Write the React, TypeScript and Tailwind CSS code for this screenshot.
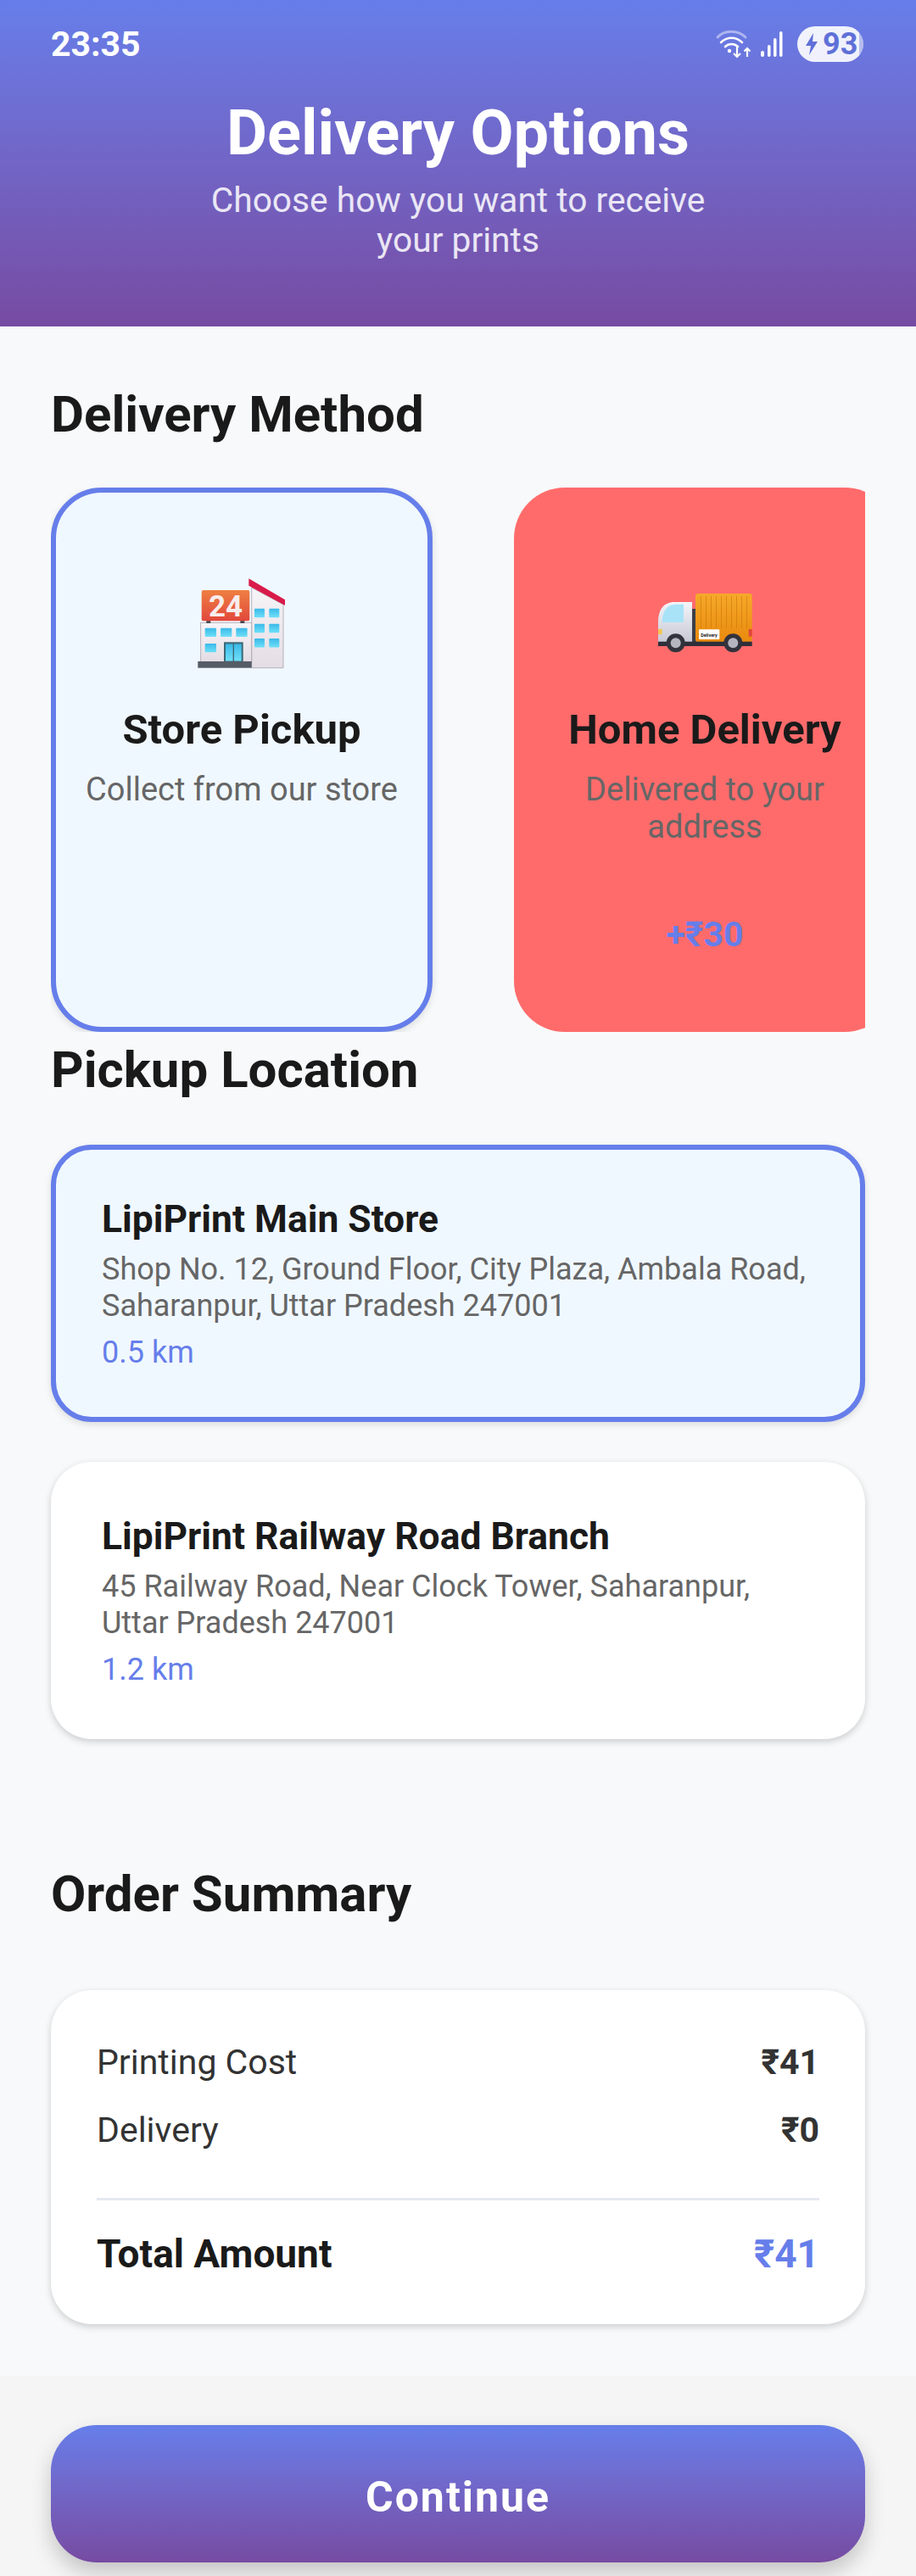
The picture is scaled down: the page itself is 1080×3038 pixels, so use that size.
const font = { fontFamily: 'Roboto, "Noto Sans", sans-serif' }

function WifiIcon() {
  return (
    <svg width="48" height="36" viewBox="0 0 48 36" fill="none" className="block">
      <path d="M3 10 C11 1 27 1 36 10" stroke="#ffffff" strokeOpacity="0.45" strokeWidth="3" strokeLinecap="round" />
      <path d="M7 16 C14 9 25 9 32 16" stroke="#ffffff" strokeWidth="2.6" strokeLinecap="round" />
      <path d="M12 21 C16 17 23 17 27 21" stroke="#ffffff" strokeWidth="2.6" strokeLinecap="round" />
      <circle cx="17" cy="26" r="2.2" fill="#ffffff" />
      <path d="M26 21 V33 M22 29 L26 33 L30 29" stroke="#ffffff" strokeWidth="2.2" />
      <path d="M38 33 V23 M34.5 26.5 L38 23 L41.5 26.5" stroke="#ffffff" strokeWidth="2.2" />
    </svg>
  )
}

function SignalIcon() {
  return (
    <svg width="28" height="32" viewBox="0 0 28 32" className="block">
      <rect x="0" y="24" width="4" height="7" rx="2" fill="#ffffff" />
      <rect x="8" y="17" width="3.5" height="14" rx="1.7" fill="#ffffff" />
      <rect x="15" y="9" width="3.5" height="22" rx="1.7" fill="#ffffff" />
      <rect x="22" y="1" width="3.5" height="30" rx="1.7" fill="#ffffff" />
    </svg>
  )
}

function BatteryPill() {
  return (
    <div className="relative flex h-[42px] w-[78px] items-center overflow-hidden rounded-[21px] bg-white/90 pl-[9px]">
      <svg width="16" height="28" viewBox="0 0 16 28" className="block shrink-0">
        <path d="M10 1 L1 16 H7 L5 27 L15 11 H9 Z" fill="#5f70d8" />
      </svg>
      <span className="ml-[5px] text-[36px] leading-none font-bold text-[#5f70d8]">93</span>
      <div className="absolute inset-y-0 right-0 w-[5px] bg-[#5f70d8]/40" />
    </div>
  )
}

function StoreEmoji() {
  return (
    <svg width="120" height="120" viewBox="0 0 120 120" className="block">
      <defs>
        <linearGradient id="sign" x1="0" y1="0" x2="0" y2="1">
          <stop offset="0" stopColor="#ee7f42" />
          <stop offset="1" stopColor="#e2483c" />
        </linearGradient>
        <linearGradient id="glass" x1="0" y1="0" x2="0" y2="1">
          <stop offset="0" stopColor="#3bb9e8" />
          <stop offset="1" stopColor="#6fe0f8" />
        </linearGradient>
        <linearGradient id="wall" x1="0" y1="0" x2="0" y2="1">
          <stop offset="0" stopColor="#f7f5f8" />
          <stop offset="1" stopColor="#e4dde4" />
        </linearGradient>
      </defs>
      <path d="M71.7 18 L109 38 V112.7 H71.7 Z" fill="url(#wall)" stroke="#a9a2ac" strokeWidth="0.8" />
      <path d="M68.3 7.3 L111 32.3 V39 L68.3 15.7 Z" fill="#d81b4a" />
      <rect x="11.7" y="59.3" width="60" height="46" fill="url(#wall)" stroke="#a9a2ac" strokeWidth="0.8" />
      <rect x="18.3" y="56" width="5" height="4" fill="#4b4f57" />
      <rect x="58.3" y="56" width="5" height="4" fill="#4b4f57" />
      <rect x="12.7" y="21" width="56.6" height="36.3" rx="2" fill="url(#sign)" />
      <text x="41" y="51.7" textAnchor="middle" fontFamily="Roboto, sans-serif" fontWeight="700" fontSize="35" fill="#f8ecec">24</text>
      <rect x="16.7" y="65.7" width="13.3" height="10.3" rx="1" fill="url(#glass)" />
      <rect x="35" y="65.7" width="13.3" height="10.3" rx="1" fill="url(#glass)" />
      <rect x="53.3" y="65.7" width="13.3" height="10.3" rx="1" fill="url(#glass)" />
      <rect x="16.7" y="84" width="13.3" height="10.3" rx="1" fill="url(#glass)" />
      <rect x="39" y="82.3" width="22.7" height="22.7" fill="#3d6a78" />
      <rect x="41" y="84.5" width="8.6" height="20" fill="url(#glass)" />
      <rect x="51" y="84.5" width="8.6" height="20" fill="url(#glass)" />
      <rect x="8.3" y="105" width="63.4" height="7.7" fill="#555c66" />
      {[75, 92.3].map((x) =>
        [42.7, 60.7, 78].map((y) => (
          <rect key={`${x}-${y}`} x={x} y={y} width="12" height="10.6" rx="1" fill="url(#glass)" />
        ))
      )}
    </svg>
  )
}

function TruckEmoji() {
  const stripes = [55, 61, 67, 73, 79, 85, 91, 97, 103, 109]
  return (
    <svg width="120" height="120" viewBox="0 0 120 120" className="block">
      <defs>
        <linearGradient id="cargo" x1="0" y1="0" x2="0" y2="1">
          <stop offset="0" stopColor="#f6a92a" />
          <stop offset="1" stopColor="#e98a0e" />
        </linearGradient>
        <linearGradient id="cab" x1="0" y1="0" x2="0" y2="1">
          <stop offset="0" stopColor="#f4f5fa" />
          <stop offset="1" stopColor="#c6c8d4" />
        </linearGradient>
      </defs>
      <rect x="45" y="43" width="5" height="39" fill="#3c3f4a" />
      <rect x="49" y="25" width="66.7" height="57" rx="3" fill="url(#cargo)" />
      {stripes.map((x) => (
        <rect key={x} x={x} y="28" width="1" height="38" fill="#c97608" opacity="0.6" />
      ))}
      <path d="M5 83 V58 C5 44 12 35 24 35 H45 V83 Z" fill="url(#cab)" />
      <path d="M9.7 59 C9.7 46 15 37.7 26 37.7 H35 V59 Z" fill="#a9e3f8" />
      <rect x="5" y="66.7" width="4.7" height="6.6" rx="1" fill="#f6c453" />
      <rect x="111.7" y="67" width="4" height="8.7" fill="#e0463a" />
      <rect x="5" y="81.7" width="110.7" height="5.3" fill="#2f2f3a" />
      <rect x="53" y="67.3" width="24.3" height="11.7" rx="1" fill="#ffffff" />
      <text x="65" y="75.5" textAnchor="middle" fontFamily="Roboto, sans-serif" fontWeight="700" fontSize="5.4" fill="#1a1a1a">Delivery</text>
      {[25.7, 93.3].map((cx) => (
        <g key={cx}>
          <circle cx={cx} cy="83.3" r="11" fill="#33333d" />
          <circle cx={cx} cy="83.3" r="6" fill="#b5b5c0" />
        </g>
      ))}
    </svg>
  )
}

function SectionTitle({ children }: { children: React.ReactNode }) {
  return <h2 className="text-[60px] leading-[72px] font-bold text-[#1a1a1a]">{children}</h2>
}

function LocationCard({ name, lines, km, selected }: { name: string; lines: string[]; km: string; selected?: boolean }) {
  return (
    <div
      className={
        selected
          ? 'flex h-[327px] flex-col justify-center rounded-[48px] border-[6px] border-[#667eea] bg-[#f0f8ff] px-[54px] shadow-[0_3px_8px_rgba(0,0,0,0.12)]'
          : 'flex h-[327px] flex-col justify-center rounded-[48px] bg-white px-[60px] shadow-[0_3px_8px_rgba(0,0,0,0.18)]'
      }
    >
      <div className="text-[44.4px] leading-[56px] font-bold text-[#1a1a1a]">{name}</div>
      <div className="mt-[10px] text-[36px] leading-[43px] whitespace-nowrap text-[#666666]">
        {lines.map((l) => (
          <div key={l}>{l}</div>
        ))}
      </div>
      <div className="mt-[11px] text-[36px] leading-[44px] text-[#667eea]">{km}</div>
    </div>
  )
}

export default function App() {
  return (
    <div style={font} className="flex h-[3038px] w-[1080px] flex-col overflow-hidden bg-[#f8f9fa]">
      <header className="h-[385px] shrink-0 bg-gradient-to-b from-[#667eea] to-[#764ba2] px-[60px] pt-[30px]">
        <div className="flex h-[44px] items-center justify-between pr-[2px]">
          <span className="text-[41px] leading-none font-bold text-white">23:35</span>
          <div className="flex items-center">
            <WifiIcon />
            <div className="mr-[15px] ml-[6px]">
              <SignalIcon />
            </div>
            <BatteryPill />
          </div>
        </div>
        <h1 className="mt-[43px] text-center text-[74px] leading-[80px] font-bold text-white">Delivery Options</h1>
        <p className="mx-auto mt-[16px] w-[640px] text-center text-[40.7px] leading-[47px] text-white/85">
          Choose how you want to receive your prints
        </p>
      </header>

      <main className="flex-1 px-[60px] pt-[68px]">
        <SectionTitle>Delivery Method</SectionTitle>

        <div className="mt-[50px] flex h-[642px] gap-[96px] overflow-hidden">
          <div className="flex w-[450px] shrink-0 flex-col items-center rounded-[60px] border-[6px] border-[#667eea] bg-[#f0f8ff] px-[30px] pt-[94px] shadow-[0_3px_8px_rgba(0,0,0,0.12)]">
            <StoreEmoji />
            <div className="mt-[36px] text-[49px] leading-[60px] font-bold whitespace-nowrap text-[#1a1a1a]">Store Pickup</div>
            <div className="mt-[18px] text-center text-[38px] leading-[44px] whitespace-nowrap text-[#666666]">Collect from our store</div>
          </div>
          <div className="flex w-[450px] shrink-0 flex-col items-center rounded-[60px] bg-[#ff6b6b] px-[36px] pt-[100px]">
            <TruckEmoji />
            <div className="mt-[36px] text-[49px] leading-[60px] font-bold whitespace-nowrap text-[#1a1a1a]">Home Delivery</div>
            <div className="mt-[18px] text-center text-[38px] leading-[44px] text-[#666666]">
              Delivered to your
              <br />
              address
            </div>
            <div className="mt-[81px] text-[41px] leading-[48px] font-bold text-[#667eea]">+₹30</div>
          </div>
        </div>

        <div className="mt-[9px]">
          <SectionTitle>Pickup Location</SectionTitle>
        </div>

        <div className="mt-[52px] flex flex-col gap-[47px]">
          <LocationCard
            selected
            name="LipiPrint Main Store"
            lines={['Shop No. 12, Ground Floor, City Plaza, Ambala Road,', 'Saharanpur, Uttar Pradesh 247001']}
            km="0.5 km"
          />
          <LocationCard
            name="LipiPrint Railway Road Branch"
            lines={['45 Railway Road, Near Clock Tower, Saharanpur,', 'Uttar Pradesh 247001']}
            km="1.2 km"
          />
        </div>

        <div className="mt-[147px]">
          <SectionTitle>Order Summary</SectionTitle>
        </div>

        <div className="mt-[77px] h-[394px] rounded-[48px] bg-white px-[54px] pt-[60px] shadow-[0_3px_8px_rgba(0,0,0,0.18)]">
          <div className="flex items-center justify-between text-[41px] leading-[50px] text-[#333333]">
            <span>Printing Cost</span>
            <span className="font-bold">₹41</span>
          </div>
          <div className="mt-[30px] flex items-center justify-between text-[41px] leading-[50px] text-[#333333]">
            <span>Delivery</span>
            <span className="font-bold">₹0</span>
          </div>
          <div className="mt-[55px] h-[3px] bg-[#e5e9f0]" />
          <div className="mt-[35px] flex items-center justify-between text-[46px] leading-[56px] font-bold">
            <span className="text-[#1a1a1a]">Total Amount</span>
            <span className="text-[#667eea]">₹41</span>
          </div>
        </div>
      </main>

      <footer className="h-[236px] shrink-0 bg-[#f5f5f5] px-[60px] pt-[58px]">
        <button className="flex h-[162px] w-full items-center justify-center rounded-[54px] bg-gradient-to-b from-[#667eea] to-[#764ba2] pt-[8px] text-[50px] font-bold tracking-[2px] text-white shadow-[0_12px_24px_rgba(0,0,0,0.2)]">
          Continue
        </button>
      </footer>
    </div>
  )
}
